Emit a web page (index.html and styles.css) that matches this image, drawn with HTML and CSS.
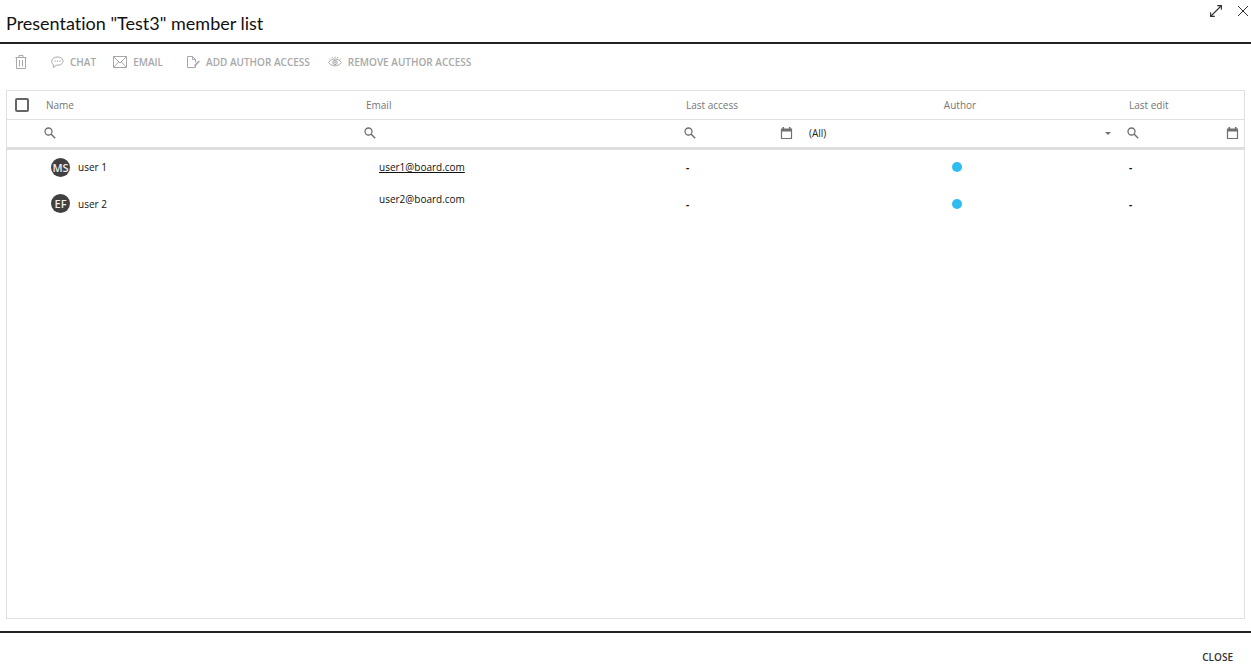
FILE: index.html
```html
<!DOCTYPE html>
<html lang="en">
<head>
  <meta charset="UTF-8">
  <meta name="viewport" content="width=device-width, initial-scale=1.0">
  <title>Member list</title>
  <link rel="stylesheet" href="styles.css">
</head>
<body>
  <!-- shared icons -->
  <svg class="sprite" aria-hidden="true">
    <symbol id="search" viewBox="0 0 12 12">
      <circle cx="4.5" cy="4.5" r="3.5" fill="none" stroke="currentColor" stroke-width="1.3"/>
      <path d="M7 7l4.2 4.2" fill="none" stroke="currentColor" stroke-width="1.5"/>
    </symbol>
    <symbol id="calendar" viewBox="0 0 13 13">
      <path d="M1.5 2.5h10v9h-10z" fill="none" stroke="currentColor" stroke-width="1.2"/>
      <path d="M1 1.5h11v3H1zM2.5 0h1.6v2H2.5zM8.9 0h1.6v2H8.9z" fill="currentColor"/>
    </symbol>
  </svg>

  <header class="header">
    <h1 class="title">Presentation "Test3" member list</h1>
    <div class="window-buttons">
      <button type="button" class="icon-button" aria-label="Expand">
        <svg width="14" height="14" viewBox="0 0 14 14" fill="none" stroke="currentColor" stroke-width="1.1"><path d="M2 12L12 2M8.2 1.6h4.2v4.2M1.6 8.2v4.2h4.2"/></svg>
      </button>
      <button type="button" class="icon-button" aria-label="Close window">
        <svg width="12" height="14" viewBox="0 0 12 14" fill="none" stroke="currentColor"><path d="M1 2l10 10M11 2L1 12"/></svg>
      </button>
    </div>
  </header>

  <div class="toolbar">
    <button type="button" class="tool tool-delete" aria-label="Delete">
      <svg width="12" height="14" viewBox="0 0 12 14"><path d="M.5 2.5h11M4 2.500V.5h4v2M1.500 2.500v11h9v-11M4.500 5v6.500M7.500 5v6.500"/></svg>
    </button>
    <button type="button" class="tool tool-chat">
      <svg width="13" height="14" viewBox="0 0 13 14"><path d="M2.3 9.7C-.8 7 .8 2 6.500 2s7.600 5.500 3 7.700C8 10.300 6.500 10.300 5.500 10.200L2.400 12.500z"/><path d="M3.400 6.200h1.200M5.900 6.200h1.200M8.400 6.200h1.200" stroke-width="1.300"/></svg>
      CHAT
    </button>
    <button type="button" class="tool tool-email">
      <svg width="14" height="14" viewBox="0 0 14 14"><path d="M.5 1.500h13v11H.5zM.5 1.500L7 8l6.500-6.500M.5 12.500l5-5.400M13.500 12.500l-5-5.400"/></svg>
      EMAIL
    </button>
    <button type="button" class="tool tool-add">
      <svg width="13" height="14" viewBox="0 0 13 14"><path d="M8.500 10.500v2h-8v-11h5l3 3v3M5.500 1.500v3h3"/><path d="M7.500 11l4.800-5" stroke-width="1.800"/></svg>
      ADD AUTHOR ACCESS
    </button>
    <button type="button" class="tool tool-remove">
      <svg width="14" height="14" viewBox="0 0 14 14"><path d="M.5 7.500C4 2.800 10 2.800 13.500 7.500 10 12 4 12 .5 7.500zM2 4.500l-.8-1M4.500 3.300L4.100 2M7 2.900V1.600M9.500 3.300l.4-1.300M12 4.500l.8-1"/><circle cx="7" cy="7.400" r="2.200"/><circle cx="7" cy="7.400" r=".8"/></svg>
      REMOVE AUTHOR ACCESS
    </button>
  </div>

  <main class="grid-panel">
    <table class="grid">
      <colgroup>
        <col class="col-check">
        <col>
        <col>
        <col class="col-access">
        <col class="col-author">
        <col class="col-edit">
      </colgroup>
      <thead>
        <tr class="head-row">
          <th><input type="checkbox" class="check" aria-label="Select all"></th>
          <th>Name</th>
          <th>Email</th>
          <th>Last access</th>
          <th class="center">Author</th>
          <th>Last edit</th>
        </tr>
        <tr class="filter-row">
          <td></td>
          <td><label class="filter"><svg class="search-icon"><use href="#search"/></svg><input type="text" aria-label="Filter name"></label></td>
          <td><label class="filter"><svg class="search-icon"><use href="#search"/></svg><input type="text" aria-label="Filter email"></label></td>
          <td><div class="filter"><svg class="search-icon"><use href="#search"/></svg><input type="text" aria-label="Filter last access"><button type="button" class="icon-button" aria-label="Pick last access date"><svg class="calendar-icon"><use href="#calendar"/></svg></button></div></td>
          <td>
            <div class="filter filter-select">
              <select aria-label="Filter author"><option>(All)</option></select>
              <svg width="6" height="3" viewBox="0 0 6 3"><path d="M0 0h6L3 3z" fill="currentColor"/></svg>
            </div>
          </td>
          <td><div class="filter"><svg class="search-icon"><use href="#search"/></svg><input type="text" aria-label="Filter last edit"><button type="button" class="icon-button" aria-label="Pick last edit date"><svg class="calendar-icon"><use href="#calendar"/></svg></button></div></td>
        </tr>
      </thead>
      <tbody>
        <tr>
          <td></td>
          <td><div class="member"><span class="avatar">MS</span>user 1</div></td>
          <td class="email"><a class="active" href="mailto:user1@board.com">user1@board.com</a></td>
          <td class="date">-</td>
          <td class="author"><span class="dot"></span></td>
          <td class="date">-</td>
        </tr>
        <tr>
          <td></td>
          <td><div class="member"><span class="avatar">EF</span>user 2</div></td>
          <td class="email email-top"><a href="mailto:user2@board.com">user2@board.com</a></td>
          <td class="date">-</td>
          <td class="author"><span class="dot"></span></td>
          <td class="date">-</td>
        </tr>
      </tbody>
    </table>
  </main>

  <footer class="footer">
    <button type="button" class="close">CLOSE</button>
  </footer>
</body>
</html>
```

FILE: styles.css
```css
* {
  box-sizing: border-box;
}

body {
  margin: 0;
  min-height: 100vh;
  display: flex;
  flex-direction: column;
  background: #fff;
  color: #111;
  font-family: "Open Sans", "Noto Sans", sans-serif;
  font-size: 10px;
  line-height: 14px;
}

button,
input,
select {
  margin: 0;
  padding: 0;
  border: 0;
  background: none;
  color: inherit;
  font: inherit;
}

svg {
  display: block;
  flex: none;
}

.sprite {
  position: absolute;
  width: 0;
  height: 0;
}

.header {
  display: flex;
  justify-content: space-between;
  height: 44px;
  padding: 4px 2px 0 6px;
  border-bottom: 2px solid #222;
}

.title {
  margin: 7px 0 0;
  font-family: Lato, sans-serif;
  font-size: 18px;
  font-weight: 400;
  font-variant-ligatures: none;
  line-height: 24px;
}

.window-buttons {
  display: flex;
  align-items: flex-start;
  gap: 14px;
  color: #333;
}

.icon-button {
  display: block;
}

.toolbar {
  display: flex;
  align-items: center;
  height: 46px;
  padding: 0 15px 10px;
  color: #a8a8a8;
  font-size: 10px;
  font-weight: 600;
}

.tool {
  display: flex;
  align-items: center;
  gap: 6px;
  white-space: nowrap;
}

.tool svg {
  fill: none;
  stroke: currentColor;
}

.tool-chat {
  margin-left: 24px;
}

.tool-email {
  margin-left: 17px;
}

.tool-add {
  margin-left: 24px;
}

.tool-remove {
  margin-left: 18px;
}

.grid-panel {
  flex: 1;
  margin: 0 6px;
  border: 1px solid #e0e0e0;
}

.grid {
  width: 100%;
  table-layout: fixed;
  border-collapse: collapse;
}

.col-check {
  width: 32px;
}

.col-access {
  width: 119px;
}

.col-author {
  width: 324px;
}

.col-edit {
  width: 122px;
}

.grid th,
.grid td {
  padding: 0 7px;
  text-align: left;
}

.head-row {
  height: 28px;
  color: #767676;
  border-bottom: 1px solid #e0e0e0;
}

.head-row th {
  font-weight: 400;
}

.head-row .center {
  text-align: center;
}

.filter-row {
  height: 29px;
  border-bottom: 3px solid #dedede;
}

.grid .filter-row td {
  padding: 0 5px 0 5px;
}

.check {
  display: block;
  appearance: none;
  width: 14px;
  height: 14px;
  margin-left: 1px;
  border: 2px solid #666;
  border-radius: 2px;
}

.filter {
  display: flex;
  align-items: center;
  color: #707070;
}

.filter input {
  flex: 1;
  min-width: 0;
}

.search-icon {
  width: 12px;
  height: 12px;
}

.calendar-icon {
  width: 13px;
  height: 13px;
}

.filter-select {
  padding: 0 6px;
}

.filter-select select {
  flex: 1;
  appearance: none;
  color: #222;
}

tbody tr {
  height: 37px;
}

.member {
  display: flex;
  align-items: center;
  gap: 8px;
  padding-left: 5px;
}

.avatar {
  width: 19px;
  border-radius: 50%;
  background: #404040;
  color: #eee;
  font-size: 11px;
  font-weight: 600;
  line-height: 19px;
  text-align: center;
}

.date {
  font-weight: 700;
}

.grid .email {
  padding: 7px 20px;
}

.grid .email-top {
  vertical-align: top;
}

.email a {
  color: inherit;
  text-decoration: none;
}

.email .active {
  text-decoration: underline;
}

.dot {
  display: block;
  width: 10px;
  height: 10px;
  margin: 0 auto;
  border-radius: 50%;
  background: #2fbcf0;
}

.grid .author {
  padding-right: 14px;
}

.footer {
  display: flex;
  justify-content: flex-end;
  height: 39px;
  margin-top: 12px;
  padding: 12px 18px 0 0;
  border-top: 2px solid #222;
}

.close {
  height: 24px;
  color: #333;
  font-weight: 600;
}
```
